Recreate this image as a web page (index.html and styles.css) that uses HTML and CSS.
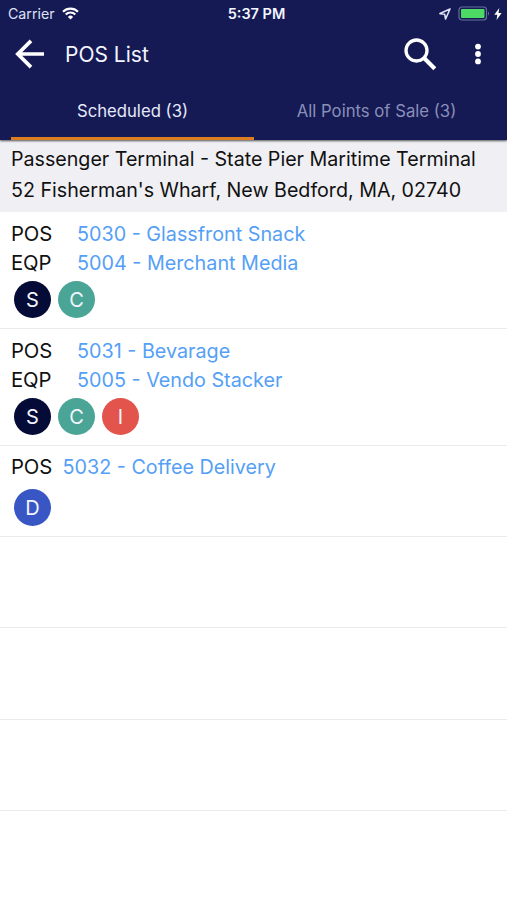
FILE: index.html
```html
<!DOCTYPE html>
<html lang="en">
<head>
<meta charset="utf-8">
<title>POS List</title>
<link rel="stylesheet" href="styles.css">
</head>
<body>
<header class="header">
  <div class="status">
    <div class="carrier"><span>Carrier</span>
      <svg class="wifi" width="17" height="13" viewBox="0 0 17 13" fill="none" stroke="#fff" stroke-width="2.1"><path d="M1 4.7a10.7 10.7 0 0 1 15 0M3.7 7.5a6.8 6.8 0 0 1 9.6 0"/><path d="M8.5 12.5 5.9 9.9a3.7 3.7 0 0 1 5.2 0z" fill="#fff" stroke="none"/></svg>
    </div>
    <span class="time">5:37 PM</span>
    <div class="power">
      <svg width="12" height="12" viewBox="0 0 12 12" fill="none" stroke="#dfe2f5" stroke-width="1.6" stroke-linejoin="round"><path d="M11 1 1 5.6l4.7.7L6.6 11z"/></svg>
      <svg class="battery" width="33" height="15" viewBox="0 0 33 15"><rect x="1" y="1" width="27.5" height="13" rx="3" fill="none" stroke="#65709a" stroke-width="1.2"/><rect x="3" y="3" width="23.5" height="9" rx="1" fill="#4cd964"/><path d="M30 5.3q2 2.2 0 4.4z" fill="#65709a"/></svg>
      <svg width="8" height="12" viewBox="0 0 8 12" fill="#fff"><path d="M5.3 0 .3 6.8h3L2.6 12l5-7.1H4.5z"/></svg>
    </div>
  </div>
  <div class="bar">
    <svg class="back" width="30" height="30" viewBox="0 0 30 30" fill="none" stroke="#fff" stroke-width="3.7"><path d="M29 15H4M16 1.9 2.8 15 16 28.1"/></svg>
    <h1>POS List</h1>
    <svg class="search" width="33" height="33" viewBox="0 0 33 33" fill="none" stroke="#fff"><circle cx="12.5" cy="12.5" r="10.5" stroke-width="3.3"/><path d="m19.8 19.8 11 11" stroke-width="4.2"/></svg>
    <svg class="more" width="6" height="22" viewBox="0 0 6 22" fill="#fff"><circle cx="3" cy="3.6" r="2.9"/><circle cx="3" cy="11" r="2.9"/><circle cx="3" cy="18.4" r="2.9"/></svg>
  </div>
  <nav class="tabs"><div class="tab active"><span>Scheduled (3)</span></div><div class="tab"><span>All Points of Sale (3)</span></div></nav>
</header>
<main>
  <section class="place">
    <div><span>Passenger Terminal - State Pier Maritime Terminal</span></div>
    <div><span>52 Fisherman's Wharf, New Bedford, MA, 02740</span></div>
  </section>
  <article class="item">
    <div class="line"><span class="label">POS</span><a>5030 - Glassfront Snack</a></div>
    <div class="line"><span class="label">EQP</span><a>5004 - Merchant Media</a></div>
    <div class="badges"><b class="s">S</b><b class="c">C</b></div>
  </article>
  <article class="item">
    <div class="line"><span class="label">POS</span><a>5031 - Bevarage</a></div>
    <div class="line"><span class="label">EQP</span><a>5005 - Vendo Stacker</a></div>
    <div class="badges"><b class="s">S</b><b class="c">C</b><b class="i">I</b></div>
  </article>
  <article class="item single">
    <div class="line"><span class="label">POS</span><a>5032 - Coffee Delivery</a></div>
    <div class="badges"><b class="d">D</b></div>
  </article>
  <div class="empty"></div><div class="empty"></div><div class="empty"></div>
</main>
</body>
</html>
```
FILE: styles.css
```css
* { box-sizing: border-box; }
body { margin: 0; height: 900px; overflow: hidden; background: #fff; color: #111; font-family: Inter, "Liberation Sans", sans-serif; }
svg { display: block; flex: none; }
.header { position: relative; height: 140px; background: #151a54; color: #f3f5ff; box-shadow: 0 1px 2px rgba(0,0,0,.65); }
.status { height: 27px; display: grid; grid-template-columns: 1fr auto 1fr; align-items: center; padding: 0 5px 0 8px; font-size: 14.2px; white-space: nowrap; }
.carrier { display: flex; align-items: center; gap: 7px; color: #dfe2f5; }
.time { margin-left: 3px; font-size: 14.5px; font-weight: 600; }
.power { display: flex; align-items: center; justify-content: flex-end; gap: 4px; }
.battery { margin-left: 3px; margin-right: -1px; }
.bar { height: 54px; display: flex; align-items: center; padding: 0 26px 0 15px; }
h1 { margin: 0 auto 0 20px; font-size: 21px; font-weight: 400; line-height: 54px; padding-top: 1px; }
.more { margin-left: 38px; }
.tabs { height: 59px; display: grid; grid-template: 59px / 243px 1fr; padding: 0 8px 0 11px; font-size: 16.7px; text-align: center; line-height: 60px; white-space: nowrap; }
.tab { height: 59px; color: #8a8fb9; }
.active { color: #e6e9fb; border-bottom: 3px solid #dd7d22; }
.place { height: 72px; padding: 4px 11px 0; background: #efeff4; font-size: 19.65px; line-height: 31px; white-space: nowrap; }
.item { height: 117px; padding: 8px 11px 0; border-bottom: 1px solid #ebebed; font-size: 19.75px; }
.line { display: flex; height: 28.5px; line-height: 29px; white-space: nowrap; }
.label { width: 66px; font-size: 20.3px; line-height: 28px; letter-spacing: -.1px; }
.line a { color: #559ff6; }
.badges { display: flex; gap: 7px; padding: 3.6px 3px; }
.badges b { width: 37px; height: 37px; border-radius: 50%; color: #f4f6ff; text-align: center; font-size: 20px; font-weight: 400; line-height: 38px; }
.s { background: #030b36; }
.c { background: #4aa596; }
.i { background: #e3544c; }
.d { background: #3857c5; }
.single { height: 91px; padding-top: 7px; }
.single .label { width: 51.5px; }
.single .badges { padding-top: 7px; }
.empty { height: 91.3px; border-bottom: 1px solid #ebebed; }
```
